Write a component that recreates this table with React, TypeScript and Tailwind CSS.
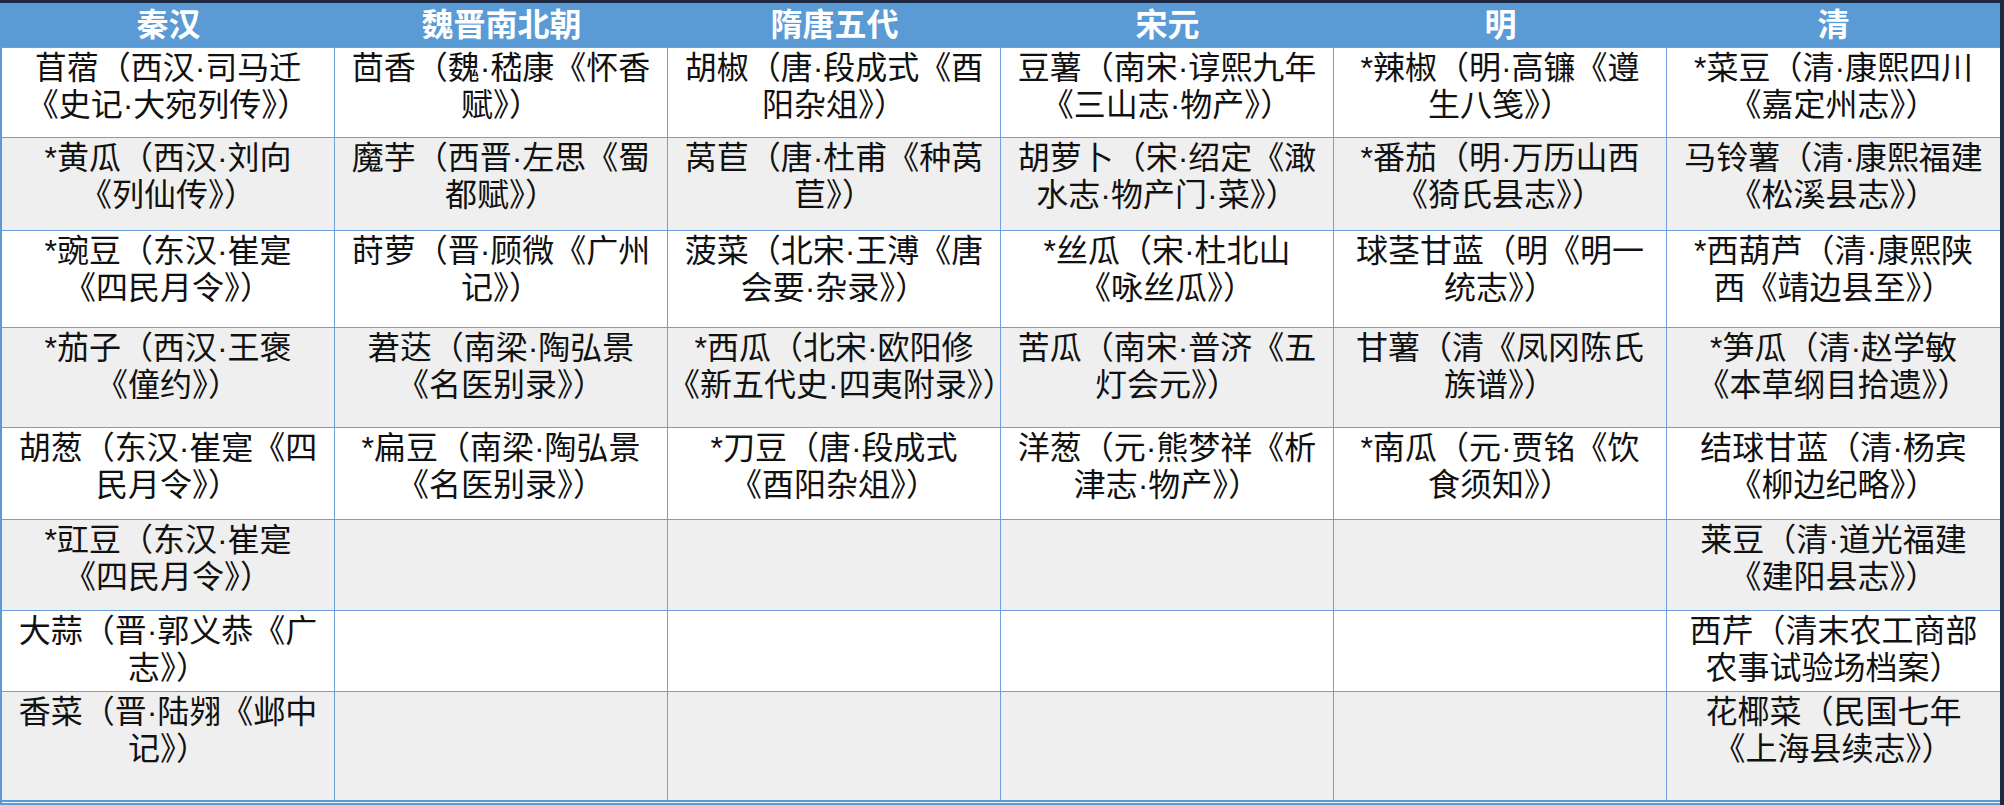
const headers = ["秦汉", "魏晋南北朝", "隋唐五代", "宋元", "明", "清"];

type Cell = string[] | null;

const rowHeights = [
  "h-[90px]",
  "h-[93px]",
  "h-[97px]",
  "h-[100px]",
  "h-[92px]",
  "h-[91px]",
  "h-[81px]",
  "h-[109px]",
];

const rows: Cell[][] = [
  [
    ["苜蓿（西汉·司马迁", "《史记·大宛列传》）"],
    ["茴香（魏·嵇康《怀香", "赋》）"],
    ["胡椒（唐·段成式《酉", "阳杂俎》）"],
    ["豆薯（南宋·谆熙九年", "《三山志·物产》）"],
    ["*辣椒（明·高镰《遵", "生八笺》）"],
    ["*菜豆（清·康熙四川", "《嘉定州志》）"],
  ],
  [
    ["*黄瓜（西汉·刘向", "《列仙传》）"],
    ["魔芋（西晋·左思《蜀", "都赋》）"],
    ["莴苣（唐·杜甫《种莴", "苣》）"],
    ["胡萝卜（宋·绍定《澉", "水志·物产门·菜》）"],
    ["*番茄（明·万历山西", "《猗氏县志》）"],
    ["马铃薯（清·康熙福建", "《松溪县志》）"],
  ],
  [
    ["*豌豆（东汉·崔寔", "《四民月令》）"],
    ["莳萝（晋·顾微《广州", "记》）"],
    ["菠菜（北宋·王溥《唐", "会要·杂录》）"],
    ["*丝瓜（宋·杜北山", "《咏丝瓜》）"],
    ["球茎甘蓝（明《明一", "统志》）"],
    ["*西葫芦（清·康熙陕", "西《靖边县至》）"],
  ],
  [
    ["*茄子（西汉·王褒", "《僮约》）"],
    ["莙荙（南梁·陶弘景", "《名医别录》）"],
    ["*西瓜（北宋·欧阳修", "《新五代史·四夷附录》）"],
    ["苦瓜（南宋·普济《五", "灯会元》）"],
    ["甘薯（清《凤冈陈氏", "族谱》）"],
    ["*笋瓜（清·赵学敏", "《本草纲目拾遗》）"],
  ],
  [
    ["胡葱（东汉·崔寔《四", "民月令》）"],
    ["*扁豆（南梁·陶弘景", "《名医别录》）"],
    ["*刀豆（唐·段成式", "《酉阳杂俎》）"],
    ["洋葱（元·熊梦祥《析", "津志·物产》）"],
    ["*南瓜（元·贾铭《饮", "食须知》）"],
    ["结球甘蓝（清·杨宾", "《柳边纪略》）"],
  ],
  [
    ["*豇豆（东汉·崔寔", "《四民月令》）"],
    null,
    null,
    null,
    null,
    ["莱豆（清·道光福建", "《建阳县志》）"],
  ],
  [
    ["大蒜（晋·郭义恭《广", "志》）"],
    null,
    null,
    null,
    null,
    ["西芹（清末农工商部", "农事试验场档案）"],
  ],
  [
    ["香菜（晋·陆翙《邺中", "记》）"],
    null,
    null,
    null,
    null,
    ["花椰菜（民国七年", "《上海县续志》）"],
  ],
];

export default function App() {
  return (
    <div className="w-[2004px] h-[805px] bg-[#1d2843] pt-[3px] pr-[4px] overflow-hidden font-['Liberation_Sans','Noto_Sans_CJK_SC',sans-serif]">
      <div className="w-[2000px] bg-white border-l-2 border-[#5b9bd5]">
        {/* Header */}
        <div className="grid grid-cols-6 h-[44px] bg-[#5b9bd5]">
          {headers.map((h) => (
            <div
              key={h}
              className="flex items-center justify-center text-white text-[32px] font-bold leading-[44px]"
            >
              {h}
            </div>
          ))}
        </div>

        {/* Body rows */}
        {rows.map((row, ri) => (
          <div
            key={ri}
            className={`grid grid-cols-6 border-t border-[#6d9fd8] ${rowHeights[ri]} ${
              ri % 2 === 0 ? "bg-white" : "bg-[#efefef]"
            }`}
          >
            {row.map((cell, ci) => (
              <div
                key={ci}
                className={`overflow-hidden pt-[2px] text-center text-[32px] leading-[37px] text-[#111] ${
                  ci < 5 ? "border-r border-[#6d9fd8]" : ""
                }`}
              >
                {cell?.map((line, li) => (
                  <div key={li} className="whitespace-nowrap">
                    {line}
                  </div>
                ))}
              </div>
            ))}
          </div>
        ))}

        {/* Bottom double rule */}
        <div className="h-[5px] bg-[#eef3fa] border-t-2 border-b-2 border-[#5b9bd5]" />
      </div>
    </div>
  );
}
